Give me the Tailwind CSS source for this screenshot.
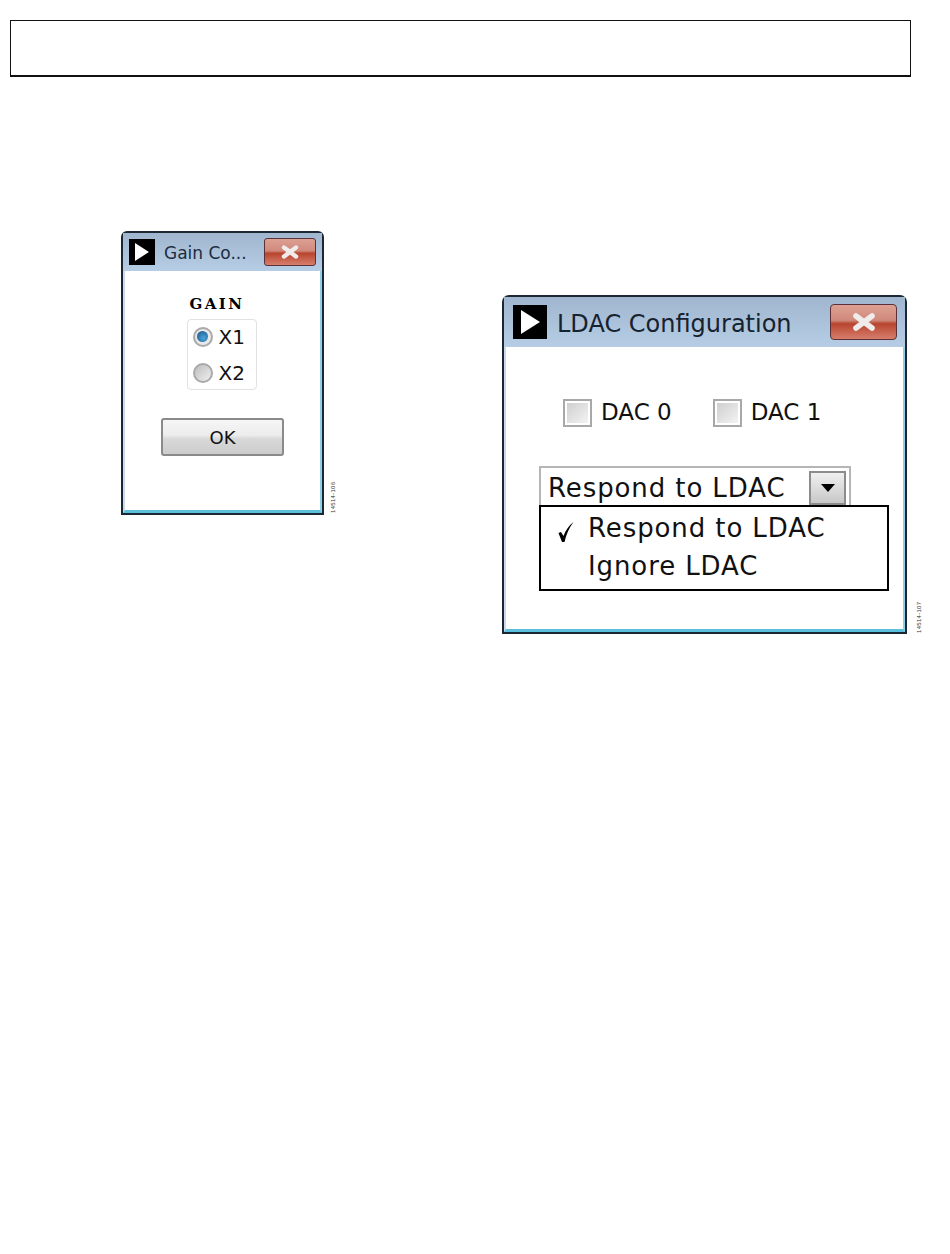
<!DOCTYPE html>
<html lang="en">
<head>
  <meta charset="UTF-8">
  <title>Gain and LDAC Configuration</title>
  <script src="https://cdn.jsdelivr.net/npm/@tailwindcss/browser@4"></script>
</head>
<body class="bg-white w-[950px] h-[1254px] overflow-hidden font-['DejaVu_Sans',sans-serif] text-[#111]">

  <!-- Header box -->
  <div class="ml-[10px] mt-[20px] w-[901px] h-[57px] border-[1.5px] border-[#111] border-b-2"></div>

  <div class="flex items-start">

    <!-- Gain window -->
    <div class="relative ml-[121px] mt-[154px] w-[203px] h-[284px] flex flex-col border-2 border-[#1b2733] rounded-t-[6px] bg-white">
      <div class="flex items-center h-[38px] pl-[6px] pr-[6px] bg-gradient-to-b from-[#a0b6ce] to-[#b6cde6]">
        <div class="w-[26px] h-[26px] bg-black flex items-center justify-center">
          <svg width="16" height="18" viewBox="0 0 16 18"><path d="M1 0 L15 9 L1 18 Z" fill="#fff"/></svg>
        </div>
        <span class="ml-[9px] mt-[2px] text-[17px] leading-none text-[#1c2c40] whitespace-nowrap">Gain Co...</span>
        <div class="ml-auto w-[52px] h-[28px] rounded-[3px] border border-[#5b3038] flex items-center justify-center bg-[linear-gradient(#dda093_0%,#d08a7c_45%,#b8452f_55%,#d67e6c_100%)]">
          <svg width="22" height="14" viewBox="0 0 22 14"><path d="M5 2.5 L17 11.5 M17 2.5 L5 11.5" stroke="#f1ecec" stroke-width="4.4" stroke-linecap="round"/></svg>
        </div>
      </div>
      <div class="flex-1 flex flex-col items-center border-l-2 border-r-2 border-b-[3px] border-l-[#c9d9ee] border-r-[#8fd0e6] border-b-[#5cc0dc]">
        <div class="mt-[26px] -ml-[11px] text-[15px] leading-none font-bold font-['DejaVu_Serif',serif] tracking-[2.5px] text-black">GAIN</div>
        <div class="mt-[7px] -ml-[2px] w-[70px] h-[71px] border border-[#e2e2e2] rounded-[4px] flex flex-col justify-center gap-[16px] pl-[5px]">
          <div class="flex items-center gap-[6px] h-[20px]">
            <div class="w-[20px] h-[20px] rounded-full border-2 border-[#a9a9a9] bg-[#e8e8e8] flex items-center justify-center">
              <div class="w-[11px] h-[11px] rounded-full bg-[radial-gradient(circle_at_60%_65%,#4aa3d8,#174f86)]"></div>
            </div>
            <span class="text-[20px] leading-none">X1</span>
          </div>
          <div class="flex items-center gap-[6px] h-[20px]">
            <div class="w-[20px] h-[20px] rounded-full border-2 border-[#a9a9a9] bg-gradient-to-br from-[#bdbdbd] to-[#f0f0f0]"></div>
            <span class="text-[20px] leading-none">X2</span>
          </div>
        </div>
        <div class="mt-[28px] w-[123px] h-[38px] rounded-[3px] border-2 border-[#8a8a8a] flex items-center justify-center text-[18px] bg-[linear-gradient(#f6f6f6_0%,#ececec_45%,#d8d8d8_55%,#cdcdcd_100%)]">OK</div>
      </div>
      <div class="absolute left-[207px] top-[280px] origin-top-left -rotate-90 text-[6px] leading-none text-[#333] font-['Liberation_Sans',sans-serif] tracking-[0.3px] whitespace-nowrap">14514-106</div>
    </div>

    <!-- LDAC window -->
    <div class="relative ml-[178px] mt-[218px] w-[405px] h-[339px] flex flex-col border-2 border-[#1b2733] rounded-t-[7px] bg-white">
      <div class="flex items-center h-[50px] pl-[9px] pr-[8px] bg-gradient-to-b from-[#a0b6ce] to-[#b6cde6]">
        <div class="w-[34px] h-[34px] bg-black flex items-center justify-center">
          <svg width="22" height="24" viewBox="0 0 22 24"><path d="M2 0 L21 12 L2 24 Z" fill="#fff"/></svg>
        </div>
        <span class="ml-[10px] mt-[3px] text-[24px] leading-none text-[#16222f] whitespace-nowrap">LDAC Configuration</span>
        <div class="ml-auto w-[67px] h-[36px] rounded-[4px] border border-[#5b3038] flex items-center justify-center bg-[linear-gradient(#dda093_0%,#d08a7c_45%,#b8452f_55%,#d67e6c_100%)]">
          <svg width="28" height="18" viewBox="0 0 28 18"><path d="M6 3 L22 15 M22 3 L6 15" stroke="#f1ecec" stroke-width="5.6" stroke-linecap="round"/></svg>
        </div>
      </div>
      <div class="relative flex-1 border-l-2 border-r-2 border-b-[3px] border-l-[#c9d9ee] border-r-[#8fd0e6] border-b-[#5cc0dc]">
        <div class="flex items-center mt-[52px] ml-[57px] h-[28px]">
          <div class="w-[29px] h-[28px] border-2 border-[#a8a8a8] p-[2px]">
            <div class="w-full h-full bg-gradient-to-br from-[#cfcfcf] to-[#f3f3f3]"></div>
          </div>
          <span class="ml-[9px] text-[23px] leading-none -mt-[2px]">DAC 0</span>
          <div class="ml-[41px] w-[29px] h-[28px] border-2 border-[#a8a8a8] p-[2px]">
            <div class="w-full h-full bg-gradient-to-br from-[#cfcfcf] to-[#f3f3f3]"></div>
          </div>
          <span class="ml-[9px] text-[23px] leading-none -mt-[2px]">DAC 1</span>
        </div>
        <!-- combo -->
        <div class="ml-[33px] mt-[39px] w-[312px] h-[41px] border-2 border-[#b5b5b5] flex items-center pl-[7px] pr-[3px]">
          <span class="mt-[2px] text-[26px] leading-none tracking-[0.9px] whitespace-nowrap">Respond to LDAC</span>
          <div class="ml-auto mt-[3px] w-[37px] h-[34px] border-2 border-[#8c8c8c] bg-gradient-to-b from-[#f0f0f0] to-[#c8c8c8] flex items-center justify-center">
            <svg width="16" height="8" viewBox="0 0 16 8"><path d="M1 0 H15 L8 8 Z" fill="#000"/></svg>
          </div>
        </div>
        <!-- dropdown menu -->
        <div class="absolute left-[33px] top-[158px] w-[350px] h-[86px] border-2 border-black bg-white flex flex-col justify-center gap-[15px]">
          <div class="flex items-center h-[24px] -mt-[3px]">
            <svg class="ml-[16px] mt-[9px]" width="18" height="22" viewBox="0 0 18 22"><path d="M1.5 12 L4 11 L6.5 15 C8.5 9.5 11.5 5 16.5 1 C12 7 9.5 13 7.5 21 L5 21 Z" fill="#000"/></svg>
            <span class="ml-[13px] text-[26px] leading-none tracking-[0.9px] whitespace-nowrap">Respond to LDAC</span>
          </div>
          <div class="flex items-center h-[24px] pl-[47px] -mt-[1px]">
            <span class="text-[26px] leading-none tracking-[0.9px] whitespace-nowrap">Ignore LDAC</span>
          </div>
        </div>
      </div>
      <div class="absolute left-[412px] top-[336px] origin-top-left -rotate-90 text-[6px] leading-none text-[#333] font-['Liberation_Sans',sans-serif] tracking-[0.3px] whitespace-nowrap">14514-107</div>
    </div>

  </div>
</body>
</html>
